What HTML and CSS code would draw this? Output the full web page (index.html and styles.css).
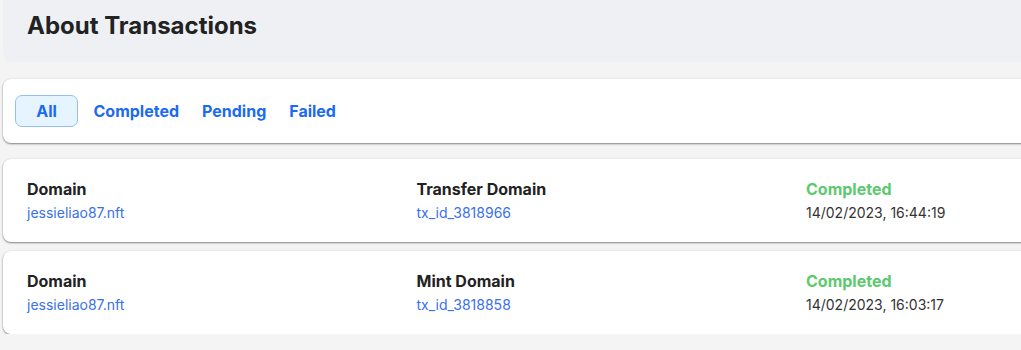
FILE: index.html
```html
<!DOCTYPE html>
<html lang="en">
<head>
<meta charset="UTF-8">
<meta name="viewport" content="width=device-width, initial-scale=1.0">
<title>About Transactions</title>
<link rel="stylesheet" href="styles.css">
</head>
<body>

<div class="page">
    <!-- header -->
    <div class="page-header">
        <h1>About Transactions</h1>
    </div>

    <!-- filter tabs -->
    <div class="card filter-bar">
        <button class="tab active">All</button>
        <button class="tab">Completed</button>
        <button class="tab">Pending</button>
        <button class="tab">Failed</button>
    </div>

    <!-- transaction list -->
    <div class="card tx-row">
        <div class="col">
            <div class="col-title">Domain</div>
            <a href="#" class="col-link">jessieliao87.nft</a>
        </div>
        <div class="col">
            <div class="col-title">Transfer Domain</div>
            <a href="#" class="col-link">tx_id_3818966</a>
        </div>
        <div class="col">
            <div class="col-title status-ok">Completed</div>
            <div class="col-date">14/02/2023, 16:44:19</div>
        </div>
    </div>

    <div class="card tx-row">
        <div class="col">
            <div class="col-title">Domain</div>
            <a href="#" class="col-link">jessieliao87.nft</a>
        </div>
        <div class="col">
            <div class="col-title">Mint Domain</div>
            <a href="#" class="col-link">tx_id_3818858</a>
        </div>
        <div class="col">
            <div class="col-title status-ok">Completed</div>
            <div class="col-date">14/02/2023, 16:03:17</div>
        </div>
    </div>
</div>

</body>
</html>
```

FILE: styles.css
```css
body {
    font-family: Inter, "Noto Sans", Arial, sans-serif;
    margin: 0;
    padding: 0;
    background-color: #f4f4f4;
    color: #222;
    overflow: hidden;
}
.page {
    width: 1218px;
    padding-left: 3px;
}
/* header */
.page-header {
    background-color: #eef0f4;
    border-radius: 0 0 10px 10px;
    height: 62px;
    padding-left: 24px;
    box-sizing: border-box;
}
.page-header h1 {
    margin: 0;
    padding-top: 11px;
    font-size: 24px;
    line-height: 30px;
    font-weight: 700;
    color: #222;
}
/* cards */
.card {
    background-color: #fff;
    border-radius: 8px;
    box-shadow: 0 1px 2px rgba(0, 0, 0, 0.45), 0 0 3px rgba(0, 0, 0, 0.06);
}
.filter-bar {
    margin-top: 17px;
    display: flex;
    align-items: center;
    padding: 16px 12px;
    height: 64px;
    box-sizing: border-box;
}
.tab {
    font-family: inherit;
    font-size: 16px;
    font-weight: 700;
    color: #1b6af2;
    background: none;
    border: 1px solid transparent;
    border-radius: 7px;
    padding: 0 10.5px;
    height: 32px;
    cursor: pointer;
}
.tab.active {
    width: 63px;
    margin-right: 4px;
    background-color: #e6f4ff;
    border-color: #94bff4;
}
/* rows */
.tx-row {
    margin-top: 16px;
    display: grid;
    grid-template-columns: 389.5px 389.5px 389.5px;
    padding: 20px 24px;
}
.tx-row + .tx-row {
    margin-top: 9px;
}
.col-title {
    font-size: 16px;
    line-height: 20px;
    font-weight: 700;
    color: #222;
}
.col-link {
    display: block;
    margin-top: 5px;
    font-size: 14px;
    line-height: 18px;
    color: #3a70ee;
    text-decoration: none;
}
.status-ok {
    color: #5cc96f;
}
.col-date {
    margin-top: 5px;
    font-size: 14px;
    line-height: 18px;
    color: #333;
}
```
